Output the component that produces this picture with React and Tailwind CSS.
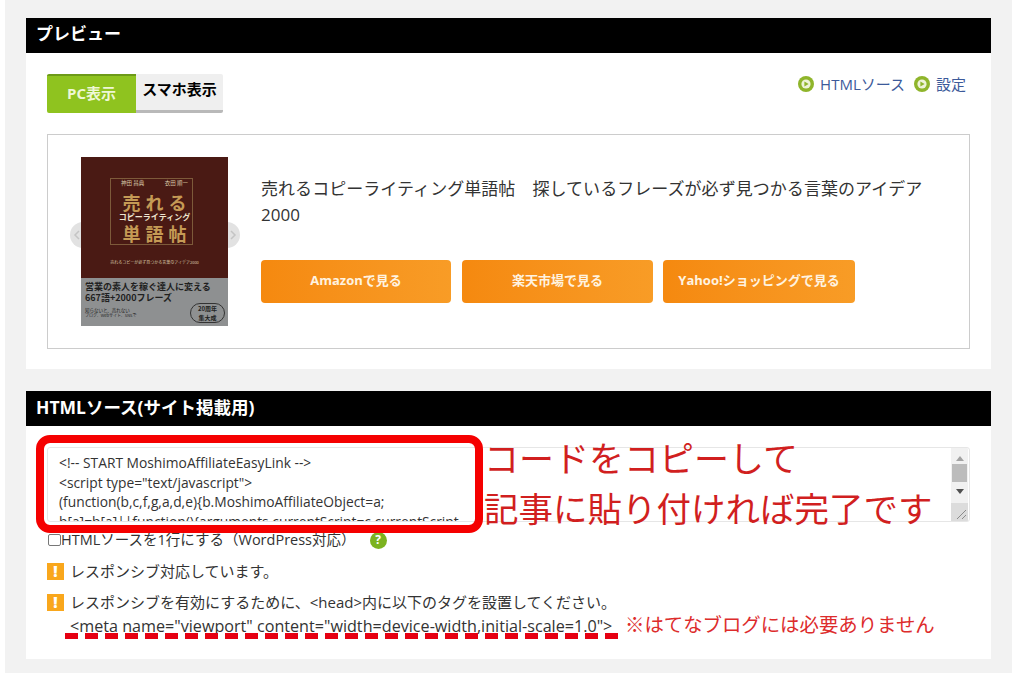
const FONT = "font-['Open_Sans','Noto_Sans_CJK_JP',sans-serif]";

const PlayIcon = () => (
  <svg width="16" height="16" viewBox="0 0 16 16" className="shrink-0">
    <circle cx="8" cy="8" r="8" fill="#8fb52b" />
    <circle cx="8" cy="8" r="4.6" fill="#eef3d8" />
    <path d="M6.4 5.4 L10.6 8 L6.4 10.6 Z" fill="#8fb52b" />
  </svg>
);

const Warn = () => (
  <span className="flex h-[17px] w-[17px] shrink-0 items-center justify-center bg-[#f9a71c] text-[15px] leading-none font-extrabold text-white">
    !
  </span>
);

const Chevron = ({ d }) => (
  <svg width="8" height="10" viewBox="0 0 8 10">
    <path d={d} fill="none" stroke="#c4c4c4" strokeWidth="1.5" />
  </svg>
);

const Heading = ({ children, size }) => (
  <div className={`flex h-[35px] items-center bg-black pb-[3px] pl-[10px] font-bold text-white ${size}`}>{children}</div>
);

const buttons = [
  { label: "Amazonで見る", className: "w-[190px]" },
  { label: "楽天市場で見る", className: "ml-[1px] w-[191px]" },
  { label: "Yahoo!ショッピングで見る", className: "w-[192px]" },
];

const BookCover = () => (
  <div className="flex h-[169px] w-[147px] flex-col overflow-hidden font-['Noto_Sans_CJK_JP',sans-serif]">
    <div className="relative flex h-[121px] flex-col items-center bg-[#4a1a14] pt-[21px] text-[#c59a55]">
      <span className="absolute top-[21px] left-[29px] h-[67px] w-[83px] border border-[#7d5a3a]" />
      <div className="flex h-[10px] w-[83px] justify-between px-[8px] text-[5.5px] leading-[10px] text-[#d8c8a8]">
        <span>神田 昌典</span>
        <span>衣田 順一</span>
      </div>
      <div className="mt-[5px] h-[18px] pl-[5px] text-[18px] leading-[18px] font-bold tracking-[5px]">売れる</div>
      <div className="h-[11px] text-[8px] leading-[11px] font-bold text-[#f0e6d0]">コピーライティング</div>
      <div className="mt-[2px] h-[18px] pl-[5px] text-[18px] leading-[18px] font-bold tracking-[5px]">単語帖</div>
      <div className="mt-[17px] text-[4px] leading-[6px] whitespace-nowrap text-[#d8c8a8]">
        売れるコピーが必ず見つかる言葉のアイデア2000
      </div>
    </div>
    <div className="relative flex-1 bg-[#8e9091] px-[4px] pt-[3px] text-[#1f1f1f]">
      <div className="h-[11px] text-[9px] leading-[11px] font-bold whitespace-nowrap">営業の素人を稼ぐ達人に変える</div>
      <div className="h-[11px] text-[9px] leading-[11px] font-bold whitespace-nowrap">667語+2000フレーズ</div>
      <div className="mt-[4px] text-[4.5px] leading-[6px]">知らないと、売れない</div>
      <div className="text-[4px] leading-[5px] whitespace-nowrap">ブログ、Webサイト、SNSで</div>
      <div className="absolute right-[3px] bottom-[3px] w-[35px] rounded-full border border-[#333333] text-center text-[6px] leading-[9px] font-bold">
        20周年
        <br />
        集大成
      </div>
    </div>
  </div>
);

const Preview = () => (
  <section>
    <Heading size="text-[17px]">プレビュー</Heading>
    <div className="h-[316px] bg-white px-[21px] pt-[21px]">
      <div className="flex h-[39px] justify-between">
        <div className="flex">
          <div className="flex w-[89px] items-center justify-center rounded-l-[2px] border-t-2 border-[#6d9a18] bg-[#8fc31f] pb-[2px] text-[15px] font-bold text-[#eef7d5]">
            PC表示
          </div>
          <div className="flex w-[87px] items-center justify-center rounded-r-[2px] border-b-[3px] border-[#b9b9b9] bg-[#efefef] pb-[5px] text-[15px] font-bold text-black">
            スマホ表示
          </div>
        </div>
        <div className="mr-[4px] flex h-[20px] items-center text-[15px] text-[#3c5a9a]">
          <PlayIcon />
          <span className="ml-[6px]">HTMLソース</span>
          <span className="ml-[9px]">
            <PlayIcon />
          </span>
          <span className="ml-[6px]">設定</span>
        </div>
      </div>
      <div className="relative mt-[21px] flex h-[215px] w-[923px] border border-[#cccccc] pt-[22px] pl-[33px]">
        <span className="absolute top-[87px] left-[22px] flex h-[26px] w-[26px] items-center rounded-full bg-[#e2e2e2] pl-[3px]">
          <Chevron d="M6 1 L2 5 L6 9" />
        </span>
        <span className="absolute top-[87px] left-[166px] flex h-[26px] w-[26px] items-center justify-end rounded-full bg-[#e2e2e2] pr-[3px]">
          <Chevron d="M2 1 L6 5 L2 9" />
        </span>
        <div className="relative">
          <BookCover />
        </div>
        <div className="ml-[33px] w-[670px]">
          <p className="mt-[19px] text-[17px] leading-[26px] tracking-[0.05px] text-[#333333]">
            売れるコピーライティング単語帖　探しているフレーズが必ず見つかる言葉のアイデア2000
          </p>
          <div className="mt-[32px] flex gap-[10px]">
            {buttons.map((b) => (
              <div
                key={b.label}
                className={`flex h-[43px] items-center justify-center rounded-[4px] bg-gradient-to-r from-[#f5890f] to-[#f89c26] pb-[1px] text-[13px] font-bold text-[#fff3e0] ${b.className}`}
              >
                {b.label}
              </div>
            ))}
          </div>
        </div>
      </div>
    </div>
  </section>
);

const Source = () => (
  <section className="mt-[22px]">
    <Heading size="text-[17.5px]">HTMLソース(サイト掲載用)</Heading>
    <div className="h-[233px] bg-white px-[21px] pt-[21px] text-[#333333]">
      <div className="relative">
        <div className="flex h-[75px] w-[923px] overflow-hidden rounded-[3px] border border-[#e6e6e6]">
          <div className="flex-1 overflow-hidden pt-[5px] pl-[11px] text-[13.8px] leading-[19.5px] whitespace-nowrap">
            <div>{"<!-- START MoshimoAffiliateEasyLink -->"}</div>
            <div>{'<script type="text/javascript">'}</div>
            <div>{"(function(b,c,f,g,a,d,e){b.MoshimoAffiliateObject=a;"}</div>
            <div>{"b[a]=b[a]||function(){arguments.currentScript=c.currentScript"}</div>
          </div>
          <div className="mr-[1px] flex w-[17px] flex-col items-center bg-[#f1f1f1]">
            <span className="mt-[8px] h-0 w-0 border-x-[4px] border-b-[5px] border-x-transparent border-b-[#a3a3a3]" />
            <span className="mt-[3px] h-[18px] w-[15px] bg-[#bcbcbc]" />
            <span className="mt-[7px] h-0 w-0 border-x-[4px] border-t-[5px] border-x-transparent border-t-[#505050]" />
            <svg width="17" height="18" viewBox="0 0 17 18" className="mt-auto bg-[#dcdcdc]">
              <path d="M6 16 L15 7 M11 16 L15 12" stroke="#8a8a8a" strokeWidth="1" />
            </svg>
          </div>
        </div>
        <div className="absolute top-[-12px] left-[-11px] h-[98px] w-[447px] rounded-[14px] border-[8px] border-[#f50000]" />
        <div className="absolute top-[-11px] left-[437px] leading-[46px] whitespace-nowrap text-[#d11f1f]">
          <p className="text-[35px]">コードをコピーして</p>
          <p className="mt-[4px] text-[34.5px]">記事に貼り付ければ完了です</p>
        </div>
      </div>
      <div className="mt-[8px] flex h-[20px] items-center text-[14.5px]">
        <span className="ml-[1px] h-[12px] w-[13px] rounded-[2px] border border-[#777777]" />
        <span>HTMLソースを1行にする（WordPress対応）</span>
        <span className="ml-[14px] flex h-[17px] w-[17px] items-center justify-center rounded-full bg-[#7cb320] text-[12px] leading-none font-bold text-white">
          ?
        </span>
      </div>
      <div className="mt-[11px] flex h-[20px] items-center gap-[6px] text-[15px]">
        <Warn />
        <span>レスポンシブ対応しています。</span>
      </div>
      <div className="mt-[11px] flex h-[20px] items-center gap-[6px] text-[15px]">
        <Warn />
        <span>{"レスポンシブを有効にするために、<head>内に以下のタグを設置してください。"}</span>
      </div>
      <div className="relative mt-[4px] h-[20px] pl-[23px] text-[16.15px] leading-[20px] whitespace-nowrap">
        <span>{'<meta name="viewport" content="width=device-width,initial-scale=1.0">'}</span>
        <svg width="553" height="6" viewBox="0 0 553 6" className="absolute top-[17px] left-[18px]">
          <line x1="0" y1="3" x2="553" y2="3" stroke="#e60012" strokeWidth="6" strokeDasharray="13 7" />
        </svg>
        <span className="absolute top-[-4px] left-[578px] text-[19.4px] leading-[26px] text-[#dd2c2c]">
          ※はてなブログには必要ありません
        </span>
      </div>
    </div>
  </section>
);

export default function App() {
  return (
    <div className={`h-[673px] w-[1024px] overflow-hidden bg-white ${FONT}`}>
      <div className="ml-[5px] h-full w-[1007px] bg-[#f2f2f2] px-[21px] pt-[18px]">
        <Preview />
        <Source />
      </div>
    </div>
  );
}
